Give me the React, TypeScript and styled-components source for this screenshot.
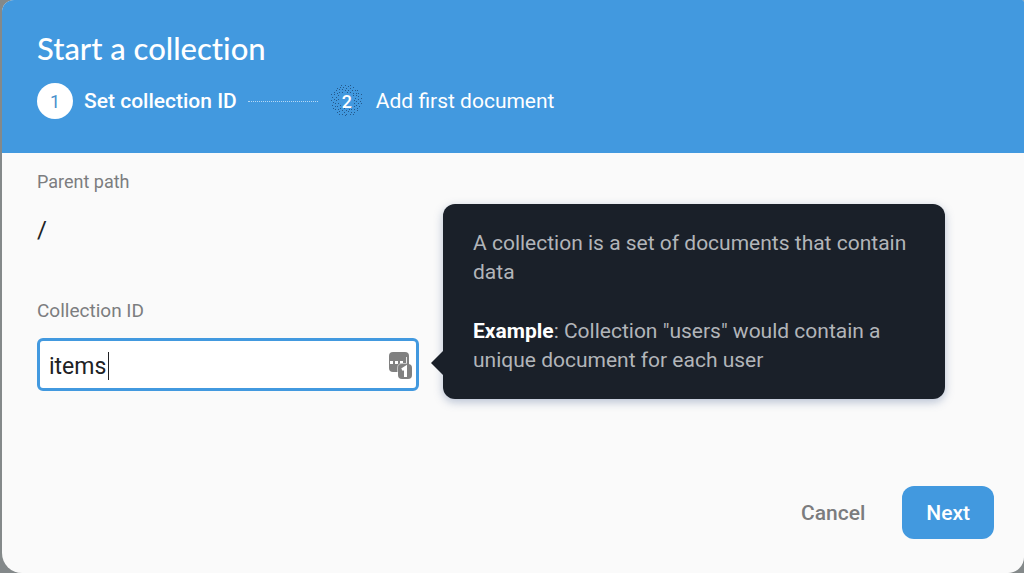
import React from 'react';
import styled, { createGlobalStyle } from 'styled-components';

const blue = '#4299df';
const ink = '#1a2029';

const GlobalStyle = createGlobalStyle`
  *, *::before, *::after { box-sizing: border-box; }
  body {
    margin: 0;
    background: #84898a;
    font-family: Roboto, "Liberation Sans", sans-serif;
  }
`;

const Dialog = styled.main`
  display: flex;
  flex-direction: column;
  min-height: 100vh;
  margin-left: 2px;
  overflow: hidden;
  border-radius: 12px 2px 16px 20px;
  background: #fafafa;
`;

const Header = styled.header`
  padding: 30px 35px 34px;
  background: ${blue};
  color: #fff;
`;

const Title = styled.h1`
  margin: 0 0 17px;
  font: 500 31px/36px Lato, sans-serif;
  font-variant-ligatures: none;
`;

const Steps = styled.ol`
  display: flex;
  align-items: center;
  margin: 0;
  padding: 0;
  list-style: none;
`;

const Step = styled.li`
  display: flex;
  align-items: center;
  gap: 11px;
`;

const StepNumber = styled.span<{ $active?: boolean }>`
  position: relative;
  display: grid;
  place-items: center;
  width: 36px;
  height: 36px;
  border-radius: 50%;
  background: ${(p) => (p.$active ? '#fff' : 'transparent')};
  color: ${(p) => (p.$active ? '#4a90cc' : '#fff')};
  font-size: 18px;
  font-weight: ${(p) => (p.$active ? 400 : 500)};
`;

const Speckle = styled.svg`
  position: absolute;
  inset: 0;
`;

const StepNumeral = styled.span`
  position: relative;
`;

const StepLabel = styled.span<{ $active?: boolean }>`
  font-size: 21px;
  line-height: 24px;
  font-weight: ${(p) => (p.$active ? 500 : 400)};
`;

const Connector = styled.li`
  width: 70px;
  margin: 0 11px;
  border-top: 1px dotted #b5d8f5;
`;

const Form = styled.form`
  display: flex;
  flex: 1;
  flex-direction: column;
  justify-content: space-between;
`;

const Body = styled.div`
  display: grid;
  grid-template-columns: minmax(0, 382fr) minmax(0, 502fr);
  gap: 24px;
  align-items: end;
  padding: 17px 79px 0 35px;
`;

const Fields = styled.div`
  padding-bottom: 8px;
`;

const Caption = styled.div`
  color: #7c7d7f;
  font-size: 18px;
  line-height: 24px;
`;

const ParentPath = styled.div`
  margin: 20px 0 53px;
  color: #202124;
  font-size: 24px;
  line-height: 32px;
`;

const FieldLabel = styled.label`
  display: block;
  color: #7c7d7f;
  font-size: 19px;
  line-height: 24px;
`;

const InputFrame = styled.div`
  position: relative;
  display: flex;
  align-items: center;
  gap: 8px;
  height: 53px;
  margin-top: 15px;
  padding: 0 3px 0 9px;
  border: 3px solid ${blue};
  border-radius: 6px;
  background: #fff;
`;

const TextInput = styled.input`
  flex: 1;
  min-width: 0;
  height: 36px;
  padding: 3px 0 0;
  border: 0;
  outline: 0;
  background: transparent;
  color: #202124;
  caret-color: transparent;
  font: 400 23px/32px Roboto, sans-serif;
`;

const Caret = styled.span`
  position: absolute;
  top: 11px;
  left: 68px;
  width: 1px;
  height: 28px;
  background: #202124;
`;

const Tooltip = styled.aside`
  position: relative;
  display: flex;
  flex-direction: column;
  gap: 30px;
  padding: 25px 30px 24px;
  border-radius: 12px;
  background: ${ink};
  box-shadow: 0 3px 10px rgba(80, 105, 150, 0.4);
  color: #b2b5b9;
  font-size: 21px;
  line-height: 29px;

  &::before {
    content: '';
    position: absolute;
    right: 100%;
    bottom: 24px;
    border: 12px solid transparent;
    border-left-width: 0;
    border-right-color: ${ink};
  }
`;

const Paragraph = styled.p`
  margin: 0;
`;

const Strong = styled.strong`
  color: #fff;
  font-weight: 700;
`;

const Actions = styled.footer`
  display: flex;
  justify-content: flex-end;
  gap: 13px;
  padding: 34px 30px;
`;

const Button = styled.button<{ $primary?: boolean }>`
  height: 53px;
  padding: 0 24px;
  border: 0;
  border-radius: 12px;
  background: ${(p) => (p.$primary ? blue : 'transparent')};
  color: ${(p) => (p.$primary ? '#fff' : '#7b7c7e')};
  font: 500 21px/24px Roboto, sans-serif;
  cursor: pointer;
`;

// Small dots scattered evenly over a ring, along a golden-angle spiral.
const dots = Array.from({ length: 84 }, (_, i) => {
  const radius = 16 * Math.sqrt((i + 26) / 110);
  const angle = i * 2.39996;
  return {
    x: Math.round(17 + radius * Math.cos(angle)),
    y: Math.round(17 + radius * Math.sin(angle)),
  };
});

const PasswordIcon = () => (
  <svg width="26" height="28" viewBox="0 0 26 28" aria-hidden="true">
    <rect x="2" y="1" width="20" height="20" rx="4" fill="#808080" />
    <path d="M3 11.5h3M8 11.5h3M13 11.5h3" stroke="#fff" strokeWidth="3" />
    <path d="M19.5 6v7" stroke="#e8e8e8" strokeWidth="1" />
    <rect x="11" y="13" width="14" height="15" rx="4" fill="#808080" />
    <path d="M10.5 21v-4q0-4.5 4.5-4.5h5" fill="none" stroke="#c4c4c4" strokeWidth="1" />
    <path d="M15 18.7l3.5-2.2v9.5" fill="none" stroke="#fff" strokeWidth="3" />
  </svg>
);

export default function App() {
  return (
    <>
      <GlobalStyle />
      <Dialog>
        <Header>
          <Title>Start a collection</Title>
          <Steps>
            <Step>
              <StepNumber $active>1</StepNumber>
              <StepLabel $active>Set collection ID</StepLabel>
            </Step>
            <Connector aria-hidden="true" />
            <Step>
              <StepNumber>
                <Speckle width="36" height="36" viewBox="0 0 36 36" aria-hidden="true">
                  {dots.map((d, i) => (
                    <rect key={i} x={d.x} y={d.y} width="1" height="1" fill="#24598c" />
                  ))}
                </Speckle>
                <StepNumeral>2</StepNumeral>
              </StepNumber>
              <StepLabel>Add first document</StepLabel>
            </Step>
          </Steps>
        </Header>
        <Form onSubmit={(e) => e.preventDefault()}>
          <Body>
            <Fields>
              <Caption>Parent path</Caption>
              <ParentPath>/</ParentPath>
              <FieldLabel htmlFor="collection-id">Collection ID</FieldLabel>
              <InputFrame>
                <TextInput id="collection-id" type="text" defaultValue="items" />
                <Caret />
                <PasswordIcon />
              </InputFrame>
            </Fields>
            <Tooltip>
              <Paragraph>A collection is a set of documents that contain data</Paragraph>
              <Paragraph>
                <Strong>Example</Strong>: Collection "users" would contain a unique document for each user
              </Paragraph>
            </Tooltip>
          </Body>
          <Actions>
            <Button type="button">Cancel</Button>
            <Button type="submit" $primary>Next</Button>
          </Actions>
        </Form>
      </Dialog>
    </>
  );
}
